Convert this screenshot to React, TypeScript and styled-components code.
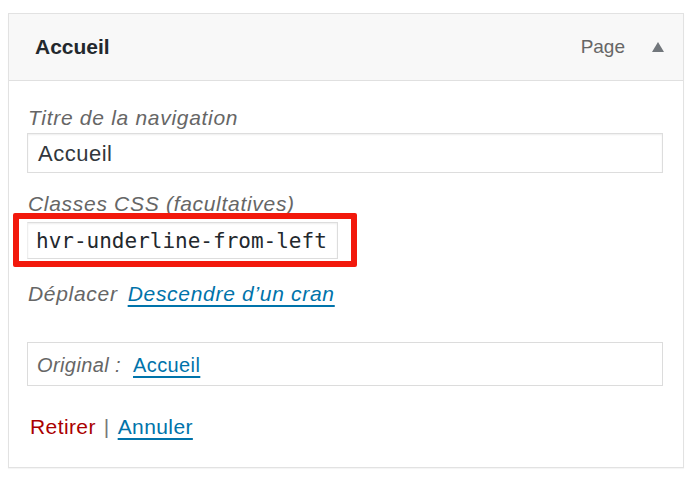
import React from 'react'
import styled, { createGlobalStyle } from 'styled-components';

const GlobalStyle = createGlobalStyle`
  html, body {
    margin: 0;
    padding: 0;
    background: #ffffff;
  }
  body {
    font-family: "Liberation Sans", Arial, sans-serif;
  }
`;

const Page = styled.div`
  width: 700px;
  height: 478px;
  padding: 13px 16px 0 8px;
  box-sizing: border-box;
`;

const Panel = styled.div`
  width: 676px;
  height: 455px;
  box-sizing: border-box;
  border: 1px solid #e2e2e2;
  box-shadow: 0 1px 1px rgba(0, 0, 0, 0.04);
  background: #fff;
  display: flex;
  flex-direction: column;
`;

const Header = styled.div`
  height: 66px;
  flex-shrink: 0;
  display: flex;
  align-items: center;
  justify-content: space-between;
  padding: 0 19px 0 26px;
  background: #f8f8f8;
  border-bottom: 1px solid #e0e0e0;
`;

const Title = styled.div`
  font-size: 21px;
  font-weight: 700;
  color: #23282d;
`;

const Controls = styled.div`
  display: flex;
  align-items: center;
  gap: 27px;
`;

const TypeLabel = styled.span`
  font-size: 19px;
  color: #666;
`;

const Body = styled.div`
  padding: 23px 20px 0 18px;
  display: flex;
  flex-direction: column;
`;

const FieldLabel = styled.div<{ $mt?: number }>`
  font-size: 21px;
  line-height: 28px;
  font-style: italic;
  letter-spacing: 0.7px;
  color: #666;
  margin-top: ${p => p.$mt ?? 0}px;
  padding-left: 1px;
`;

const TextInput = styled.div`
  margin-top: 1px;
  height: 40px;
  box-sizing: border-box;
  border: 1px solid #ddd;
  box-shadow: inset 0 1px 2px rgba(0, 0, 0, 0.07);
  display: flex;
  align-items: center;
  padding: 2px 10px 0;
  font-size: 22px;
  letter-spacing: 0.5px;
  color: #32373c;
`;

const FrameWrap = styled.div`
  position: relative;
  margin-top: 4px;
  width: 311px;
`;

const CodeInput = styled.div`
  height: 37px;
  box-sizing: border-box;
  border: 1px solid #ddd;
  border-left-color: #eee;
  box-shadow: inset 0 1px 2px rgba(0, 0, 0, 0.07);
  display: flex;
  align-items: center;
  padding: 1px 8px 0;
  font-family: "DejaVu Sans Mono", "Liberation Mono", monospace;
  font-size: 21px;
  color: #23282d;
  white-space: nowrap;
`;

// annotation drawn over the field
const RedFrame = styled.div`
  position: absolute;
  top: -9px;
  left: -14px;
  right: -19px;
  bottom: -8px;
  border: 6px solid #f2190c;
  border-radius: 2px;
  pointer-events: none;
`;

const MoveRow = styled.div`
  margin-top: 21px;
  font-size: 21px;
  line-height: 28px;
  font-style: italic;
  letter-spacing: 0.7px;
  color: #666;
  display: flex;
  gap: 10px;
  padding-left: 1px;
`;

const Link = styled.a`
  color: #0073aa;
  text-decoration: underline;
  text-underline-offset: 4px;
  text-decoration-thickness: 1.5px;
  cursor: pointer;
`;

const OriginalBox = styled.div`
  margin-top: 34px;
  height: 44px;
  box-sizing: border-box;
  border: 1px solid #dcdcdc;
  display: flex;
  align-items: center;
  gap: 12px;
  padding: 2px 9px 0;
  font-size: 20px;
  letter-spacing: 0.4px;
`;

const Muted = styled.span`
  font-style: italic;
  color: #666;
`;

const Actions = styled.div`
  margin-top: 27px;
  font-size: 21px;
  line-height: 28px;
  letter-spacing: 0.4px;
  display: flex;
  align-items: baseline;
  gap: 8px;
  padding-left: 3px;
`;

const Remove = styled.a`
  color: #a00;
  cursor: pointer;
`;

const Sep = styled.span`
  color: #777;
`;

const Arrow = () => (
  <svg width="12" height="10" viewBox="0 0 12 10">
    <polygon points="6,0 12,10 0,10" fill="#72777c" />
  </svg>
);

export default function App() {
  return (
    <Page>
      <GlobalStyle />
      <Panel>
        <Header>
          <Title>Accueil</Title>
          <Controls>
            <TypeLabel>Page</TypeLabel>
            <Arrow />
          </Controls>
        </Header>
        <Body>
          <FieldLabel>Titre de la navigation</FieldLabel>
          <TextInput>Accueil</TextInput>
          <FieldLabel $mt={17}>Classes CSS (facultatives)</FieldLabel>
          <FrameWrap>
            <CodeInput>hvr-underline-from-left</CodeInput>
            <RedFrame />
          </FrameWrap>
          <MoveRow>
            <span>Déplacer</span>
            <Link>Descendre d’un cran</Link>
          </MoveRow>
          <OriginalBox>
            <Muted>Original :</Muted>
            <Link>Accueil</Link>
          </OriginalBox>
          <Actions>
            <Remove>Retirer</Remove>
            <Sep>|</Sep>
            <Link>Annuler</Link>
          </Actions>
        </Body>
      </Panel>
    </Page>
  );
}
